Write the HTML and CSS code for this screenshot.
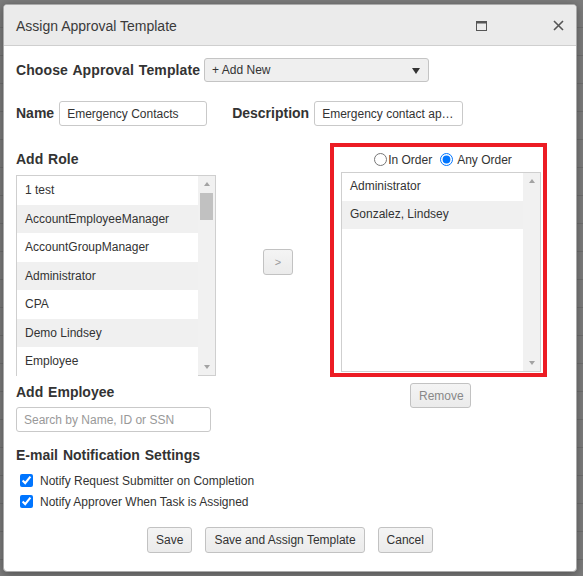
FILE: index.html
```html
<!DOCTYPE html>
<html>
<head>
<meta charset="utf-8">
<link rel="stylesheet" href="styles.css">
</head>
<body>
<div class="backdrop">
  <div class="modal">
    <div class="modal-header">
      <span class="modal-title">Assign Approval Template</span>
      <span class="hdr-icons">
        <svg class="ico-max" width="11" height="10" viewBox="0 0 11 10"><rect x="0.5" y="0.5" width="10" height="9" fill="none" stroke="#555" stroke-width="1"/><rect x="0.5" y="0.5" width="10" height="2" fill="#555"/></svg>
        <svg class="ico-close" width="11" height="11" viewBox="0 0 11 11"><path d="M1 1 L10 10 M10 1 L1 10" stroke="#555" stroke-width="1.6" fill="none"/></svg>
      </span>
    </div>
    <div class="modal-body">
      <div class="row row-choose">
        <span class="lbl">Choose Approval Template</span>
        <div class="select"><span>+ Add New</span><span class="caret"></span></div>
      </div>
      <div class="row row-name">
        <span class="lbl">Name</span>
        <input class="inp inp-name" type="text" value="Emergency Contacts">
        <span class="lbl lbl-desc">Description</span>
        <input class="inp inp-desc" type="text" value="Emergency contact approval template">
      </div>
      <div class="main">
        <div class="col-left">
          <div class="lbl block">Add Role</div>
          <div class="listbox">
            <div class="items">
              <div class="item">1 test</div>
              <div class="item alt">AccountEmployeeManager</div>
              <div class="item">AccountGroupManager</div>
              <div class="item alt">Administrator</div>
              <div class="item">CPA</div>
              <div class="item alt">Demo Lindsey</div>
              <div class="item">Employee</div>
            </div>
            <div class="sbar">
              <span class="arr up"></span>
              <div class="thumb-track"><div class="thumb"></div></div>
              <span class="arr down"></span>
            </div>
          </div>
          <div class="lbl block lbl-emp">Add Employee</div>
          <input class="inp inp-search" type="text" placeholder="Search by Name, ID or SSN">
        </div>
        <div class="col-mid">
          <button class="btn btn-move">&gt;</button>
        </div>
        <div class="col-right">
          <div class="redbox">
            <div class="radios">
              <label class="radio"><input type="radio" name="ord">In Order</label>
              <label class="radio"><input type="radio" name="ord" checked> Any Order</label>
            </div>
            <div class="listbox listbox-r">
              <div class="items">
                <div class="item">Administrator</div>
                <div class="item alt">Gonzalez, Lindsey</div>
              </div>
              <div class="sbar">
                <span class="arr up"></span>
                <div class="thumb-track"></div>
                <span class="arr down"></span>
              </div>
            </div>
          </div>
          <button class="btn btn-remove">Remove</button>
        </div>
      </div>
      <div class="lbl block lbl-email">E-mail Notification Settings</div>
      <label class="chk"><input type="checkbox" checked>Notify Request Submitter on Completion</label>
      <label class="chk"><input type="checkbox" checked>Notify Approver When Task is Assigned</label>
      <div class="actions">
        <button class="btn">Save</button>
        <button class="btn">Save and Assign Template</button>
        <button class="btn">Cancel</button>
      </div>
    </div>
  </div>
</div>
</body>
</html>
```
FILE: styles.css
```css
* { box-sizing: border-box; }
html, body { margin: 0; padding: 0; }
body {
  width: 583px;
  height: 576px;
  overflow: hidden;
  background: #7a7a7a;
  font-family: "Liberation Sans", Arial, sans-serif;
  color: #333;
}
.backdrop {
  padding: 4px 0 0 3px;
  background: repeating-linear-gradient(to bottom, #7c7c7c 0, #7c7c7c 27px, #6e6e6e 27px, #6e6e6e 28px);
  height: 576px;
}
.modal {
  width: 574px;
  height: 568px;
  background: #fff;
  border: 1px solid #aaa;
  border-radius: 4px;
  box-shadow: 0 2px 8px rgba(0,0,0,0.35);
  overflow: hidden;
}
.modal-header {
  height: 41px;
  background: #ebebeb;
  border-bottom: 1px solid #cfcfcf;
  display: flex;
  align-items: center;
  justify-content: space-between;
  padding: 0 12px 0 12px;
}
.modal-title {
  font-size: 14px;
  color: #3a3a3a;
  margin-top: 1px;
}
.hdr-icons { display: flex; align-items: center; gap: 66px; }
.ico-max { margin-top: 1px; }
.ico-close { margin-top: 1px; }

.modal-body { padding: 12px 0 0 12px; }
.row { display: flex; align-items: center; }
.lbl {
  font-weight: bold;
  font-size: 14px;
  line-height: 17px;
  color: #333;
  word-spacing: 1px;
}
.row-choose .lbl { letter-spacing: 0.1px; }
.block { display: block; }
.row-choose { height: 24px; }
.select {
  margin-left: 4px;
  width: 225px;
  height: 24px;
  border: 1px solid #c4c4c4;
  border-radius: 3px;
  background: #efefef;
  display: flex;
  align-items: center;
  justify-content: space-between;
  padding: 0 8px 0 7px;
  font-size: 12px;
  color: #333;
}
.caret {
  width: 0; height: 0;
  border-left: 4px solid transparent;
  border-right: 4px solid transparent;
  border-top: 6px solid #333;
  margin-top: 2px;
}
.row-name { margin-top: 19px; height: 25px; }
.inp {
  height: 25px;
  border: 1px solid #c9c9c9;
  border-radius: 3px;
  padding: 0 7px;
  font-family: "Liberation Sans", Arial, sans-serif;
  font-size: 12px;
  color: #333;
  text-overflow: ellipsis;
  outline: none;
}
.inp-name { width: 148px; margin-left: 5px; }
.lbl-desc { margin-left: 25px; }
.inp-desc { width: 149px; margin-left: 5px; }

.main { display: flex; margin-top: 17px; }
.col-left { width: 200px; padding-top: 8px; }
.col-left .block { margin-bottom: 7px; }
.listbox {
  width: 200px;
  height: 201px;
  border: 1px solid #cfcfcf;
  display: flex;
  background: #f1f1f1;
}
.items { width: 181px; background: #fff; }
.item {
  height: 28.5px;
  line-height: 28.5px;
  font-size: 12px;
  padding-left: 8px;
  color: #333;
  background: #fff;
  white-space: nowrap;
}
.item.alt { background: #f0f0f0; }
.sbar {
  width: 17px;
  display: flex;
  flex-direction: column;
  align-items: center;
  background: #f1f1f1;
}
.arr { width: 0; height: 0; border-left: 3.5px solid transparent; border-right: 3.5px solid transparent; }
.arr.up { border-bottom: 4px solid #a3a3a3; margin: 6px 0 7px; }
.arr.down { border-top: 4px solid #a3a3a3; margin: 7px 0 6px; }
.thumb-track { flex: 1; width: 100%; padding: 0 2px; }
.thumb { height: 27px; background: #c1c1c1; }
.lbl-emp { margin-top: 8px; margin-bottom: 6px !important; }
.inp-search { width: 195px; }
.inp-search::placeholder { color: #999; }

.col-mid { width: 114px; }
.btn {
  height: 26px;
  padding: 0 8px;
  border: 1px solid #c2c2c2;
  border-radius: 3px;
  background: linear-gradient(#f4f4f4, #ebebeb);
  font-family: "Liberation Sans", Arial, sans-serif;
  font-size: 12px;
  color: #333;
}
.btn-move {
  margin: 106px 0 0 47px;
  width: 30px;
  color: #999;
  font-size: 11px;
}
.col-right { width: 217px; display: flex; flex-direction: column; }
.redbox {
  width: 217px;
  height: 234px;
  border: 4px solid #ec1c24;
  padding: 0 2px 0 7px;
}
.radios {
  height: 25px;
  display: flex;
  align-items: center;
  justify-content: center;
  padding-left: 4px;
  font-size: 12px;
  color: #333;
}
.radio { display: flex; align-items: center; }
.radio input { margin: 0 1px 0 0; width: 13px; height: 13px; }
.radio + .radio { margin-left: 8px; }
.radio + .radio input { margin-right: 4px; }
.listbox-r { height: 200px; }
.listbox-r .item { height: 28px; line-height: 27px; }
.btn-remove {
  margin: 6px 0 0 80px;
  width: 61px;
  height: 25px;
  color: #888;
  align-self: flex-start;
}

.lbl-email { margin-top: 15px; margin-bottom: 6px; }
.chk {
  display: flex;
  align-items: center;
  height: 21px;
  font-size: 12px;
  color: #333;
}
.chk input { width: 13px; height: 13px; margin: 0 7px 0 4px; accent-color: #0075ff; }
.actions {
  margin-top: 15px;
  display: flex;
  justify-content: center;
  gap: 13px;
  padding-right: 12px;
}
```
